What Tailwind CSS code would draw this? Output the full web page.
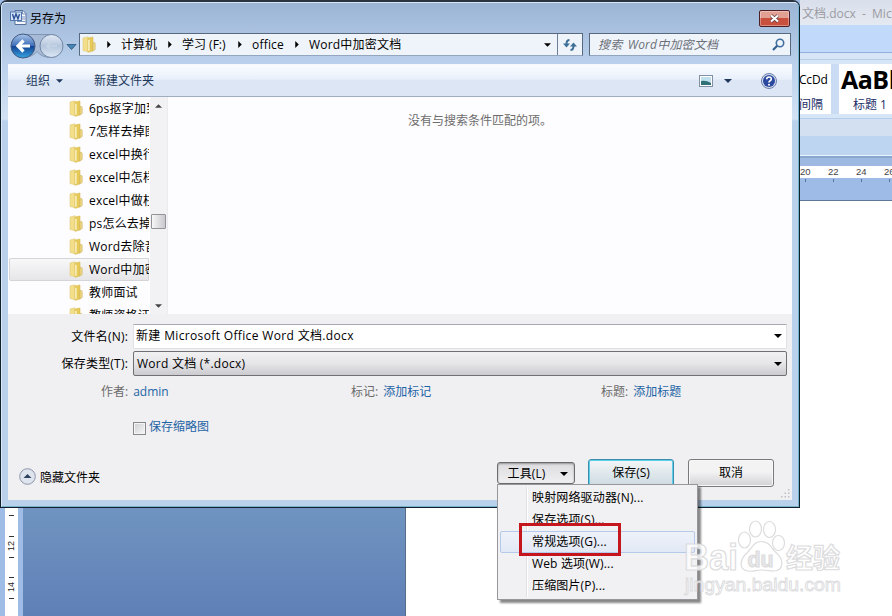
<!DOCTYPE html>
<html lang="zh-CN">

<head>
    <meta charset="UTF-8">
    <meta name="viewport" content="width=device-width, initial-scale=1.0">
    <title>另存为</title>
    <script src="https://cdn.jsdelivr.net/npm/@tailwindcss/browser@4"></script>
</head>

<body class="relative h-[616px] w-[892px] overflow-hidden bg-white font-['Open_Sans','Noto_Sans_CJK_SC',sans-serif] text-[12px] leading-[16px] text-black">

    <!-- Iconos compartidos -->
    <svg class="hidden">
        <symbol id="folder" viewBox="0 0 14 17">
            <path d="M1 2 6 .8v15L1 14.500z" fill="#f3df8a" stroke="#e0cb7c" stroke-width=".6" />
            <path d="M6 2 11 1v14l-5 1.300z" fill="#e6c957" stroke="#d9bd58" stroke-width=".6" />
            <path d="M6.300 4 7.500 3.500v11l-1.200.5z" fill="#fffbe0" />
            <path d="M11 6.500h1.200q1 0 1 1v6l-2.200 1.500z" fill="#efd980" stroke="#cdb468" stroke-width=".6" />
        </symbol>
        <symbol id="down" viewBox="0 0 8 4">
            <path d="M0 0h8L4 4z" fill="currentColor" />
        </symbol>
        <symbol id="right" viewBox="0 0 4 8">
            <path d="M0 0v8l4-4z" fill="currentColor" />
        </symbol>
    </svg>

    <!-- Ventana de Word -->
    <div class="flex h-full flex-col">
        <div class="flex h-[201px] shrink-0 justify-end bg-[#9dbbe6]">
            <div class="flex w-[92px] flex-col overflow-hidden whitespace-nowrap">
                <div class="h-[25px] shrink-0 bg-linear-to-b from-[#d9dfeb] to-[#e5e9f1] pt-[6px] pl-[2px] text-[12px] text-[#9b9ca3]">文档.docx&nbsp; - &nbsp;Micro</div>
                <div class="h-[28px] shrink-0 border-b border-[#8fb0df] bg-[#c1d9fb]"></div>
                <div class="h-[66px] shrink-0 border-b border-[#b4cdea] bg-[#d7e6f7]">
                    <div class="h-[7px] border-b border-[#b7cde8]"></div>
                    <div class="mt-[4px] flex h-[50px] gap-[8px] bg-[#c9dcf3]">
                        <div class="w-[31px] shrink-0 bg-white">
                            <p class="mt-[8px] -ml-[1px] font-['Open_Sans'] text-[12px] tracking-[-0.2px]">CcDd</p>
                            <p class="mt-[9px] -ml-[1px] text-[#1c2c66]">间隔</p>
                        </div>
                        <div class="w-[60px] shrink-0 bg-white">
                            <p class="pl-[2px] font-['Open_Sans'] text-[25px] leading-[31px] font-bold tracking-[-0.5px]">AaBb</p>
                            <p class="mt-[2px] pl-[14px] text-[#1c2c66]">标题 1</p>
                        </div>
                    </div>
                </div>
                <div class="h-[17px] shrink-0 bg-[#d2e0f2]"></div>
                <div class="h-[20px] shrink-0 border-b border-[#e5f6fb] bg-[#bdd5f1]"></div>
                <div class="h-[10px] shrink-0 border-t-2 border-[#8aa7cf] bg-[#9db9e2]"></div>
                <div class="grid h-[12px] shrink-0 grid-cols-[28px_28px_28px_28px] bg-white font-['Liberation_Sans'] text-[9.5px] leading-[12px] text-[#444]">
                    <span>20</span><span>22</span><span>24</span><span>26</span>
                </div>
                <div class="flex h-[22px] shrink-0 gap-[27px] bg-[#9dbbe6] pt-[1px] pl-[5px]">
                    <i class="h-[3px] w-px bg-[#55759f]"></i>
                    <i class="h-[3px] w-px bg-[#55759f]"></i>
                    <i class="h-[3px] w-px bg-[#55759f]"></i>
                    <i class="h-[3px] w-px bg-[#55759f]"></i>
                </div>
                <div class="h-px shrink-0 bg-[#5e7594]"></div>
            </div>
        </div>
        <div class="flex grow">
            <div class="w-[5px] bg-[#9fbce6]"></div>
            <div class="w-[13px] bg-white pt-[307px]">
                <svg class="h-[108px] w-[13px]" viewBox="0 0 13 108" fill="none" stroke="#333">
                    <path d="M4 7.500h5M4 28.500h5M4 49.500h5M4 69.500h5M4 90.500h5" />
                    <g fill="#222" stroke="none" font-family="Liberation Sans" font-size="9">
                        <text transform="translate(9 43) rotate(-90)">12</text>
                        <text transform="translate(9 84) rotate(-90)">14</text>
                    </g>
                </svg>
            </div>
            <div class="w-[5px] bg-[#9fbce6]"></div>
            <div class="w-[383px] border-r border-[#5a6d88] bg-linear-to-b from-[#6f93c0] from-75% to-[#5f80b7]"></div>
            <div class="grow bg-white"></div>
        </div>
    </div>

    <!-- Cuadro de diálogo "Guardar como" -->
    <div class="absolute top-0 left-0 flex h-[508px] w-[800px] flex-col rounded-t-[7px] border border-t-2 border-[#10202c] border-t-[#2b3440] bg-[#b9d1ec] whitespace-nowrap">
        <div class="flex min-h-0 grow flex-col rounded-t-[5px] border border-[#d9e7f6] border-r-[#73b5cf] border-b-[#79b3c9] bg-[linear-gradient(to_bottom,#9cb5d5_0,#bad0ec_60px,#d3e2f4_116px,#b9d1ea_118px,#b9d1ea_100%)] px-[6px] pb-[6px]">

            <!-- Barra de título -->
            <div class="flex h-[30px] shrink-0 items-start pt-[6px] pl-[2px]">
                <svg class="mt-[1px] h-[15px] w-[17px]" viewBox="0 0 17 15">
                    <path d="M5 .5h8l3 3v11H5z" fill="#f5f8fd" stroke="#56729c" />
                    <path d="M12.500 1v3H16M12 7h3M12 9h3M7 11.500h8" fill="none" stroke="#7895be" />
                    <rect x=".5" y="2" width="11" height="8.500" fill="#d7e4f7" stroke="#5277af" />
                    <path d="m2.500 4 1.500 5 2-5 2 5 1.500-5" fill="none" stroke="#2c5298" stroke-width="1.400" />
                </svg>
                <span class="mt-[2px] ml-[3px]">另存为</span>
                <button class="mt-[1px] mr-[2px] ml-auto flex h-[17px] w-[31px] items-center justify-center rounded-[2px] border border-[#4d2026] bg-linear-to-b from-[#e2a093] from-45% to-[#c9503c] to-50% shadow-[inset_0_0_0_1px_#ffffff55]">
                    <svg class="h-[9px] w-[11px]" viewBox="0 0 11 9">
                        <path d="m2 1.500 7 6m0-6-7 6" stroke="#5d3a42" stroke-width="3.600" />
                        <path d="m2 1.500 7 6m0-6-7 6" stroke="#fff" stroke-width="2.200" />
                    </svg>
                </button>
            </div>

            <!-- Navegación -->
            <div class="flex h-[31px] shrink-0 items-start">
                <svg class="-mt-px h-[28px] w-[70px] shrink-0" viewBox="8 32 70 28">
                    <defs>
                        <linearGradient id="back" x2="0" y2="1">
                            <stop offset="0" stop-color="#aac5ea" />
                            <stop offset=".48" stop-color="#3f6fb8" />
                            <stop offset=".5" stop-color="#123f91" />
                            <stop offset="1" stop-color="#38a5e2" />
                        </linearGradient>
                        <linearGradient id="fwd" x2="0" y2="1">
                            <stop offset="0" stop-color="#e2ebf6" />
                            <stop offset=".5" stop-color="#b5c6dc" />
                            <stop offset="1" stop-color="#dce8f5" />
                        </linearGradient>
                    </defs>
                    <path d="M23 34.500h28a11.500 11.500 0 0 1 0 23q-9 0-14-6-5 6-14 6" fill="#a7bbd6" stroke="#8195b3" />
                    <circle cx="23" cy="46" r="12" fill="url(#back)" stroke="#40587f" />
                    <circle cx="51.500" cy="46" r="11.500" fill="url(#fwd)" stroke="#7187a6" />
                    <path d="M30 46H18m5.500-5.500L18 46l5.500 5.500" fill="none" stroke="#fff" stroke-width="3.200" />
                    <path d="M57 46H47m4-4-4 4 4 4" fill="none" stroke="#c8d5e6" stroke-width="1.500" />
                    <path d="M67 44.500h9l-4.500 5z" fill="#4787b5" stroke="#28547e" stroke-width=".8" />
                </svg>
                <div class="ml-px flex h-[23px] w-[504px] items-center border border-[#57697f] border-b-[#93a6bf] bg-[#eff4fb]">
                    <svg class="ml-[2px] h-[17px] w-[14px]"><use href="#folder" /></svg>
                    <svg class="ml-[11px] h-[7px] w-[4px]"><use href="#right" /></svg>
                    <span class="ml-[10px] w-[36px]">计算机</span>
                    <svg class="ml-[11px] h-[7px] w-[4px]"><use href="#right" /></svg>
                    <span class="ml-[10px] w-[46px]">学习 (F:)</span>
                    <svg class="ml-[10px] h-[7px] w-[4px]"><use href="#right" /></svg>
                    <span class="ml-[10px] w-[32px] tracking-[0.2px]">office</span>
                    <svg class="ml-[11px] h-[7px] w-[4px]"><use href="#right" /></svg>
                    <span class="ml-[10px] tracking-[0.2px]">Word中加密文档</span>
                    <svg class="mr-[6px] ml-auto h-[4px] w-[7px]"><use href="#down" /></svg>
                    <div class="flex h-full w-[25px] items-center justify-center border-l border-[#6d7f96]">
                        <svg class="h-[12px] w-[14px]" viewBox="0 0 14 12" fill="none" stroke="#3d7097" stroke-width="2">
                            <path d="M6.500 1Q3.500 1 3.500 5" />
                            <path d="M7.500 11q3 0 3-4" />
                            <path d="M0 4.500h7L3.500 8.500zM7 7.500h7l-3.500-4z" fill="#3d7097" stroke="none" />
                        </svg>
                    </div>
                </div>
                <div class="ml-[6px] flex h-[23px] w-[202px] items-center border border-[#57697f] border-b-[#93a6bf] bg-[#eff4fb] pl-[8px] text-[#6b7078] italic">
                    <span class="pt-[1px] tracking-[0.2px] word-spacing">搜索&nbsp;<span class="ml-[2px]">Word中加密文档</span></span>
                    <svg class="mr-[5px] ml-auto h-[13px] w-[13px]" viewBox="0 0 13 13" fill="none">
                        <circle cx="8" cy="5" r="3.700" stroke="#3f6d9c" stroke-width="1.600" />
                        <path d="m5.200 7.800-4.200 4.200" stroke="#35608f" stroke-width="2.200" />
                    </svg>
                </div>
            </div>

            <!-- Barra de comandos -->
            <div class="flex h-[33px] shrink-0 items-center border-t border-b border-t-[#f4f8fc] border-b-[#a0adbf] bg-linear-to-b from-[#fafcff] from-0% via-[#e9f0fb] via-45% to-[#dce6f5] to-50% pl-[18px] text-[#1e395b]">
                <span>组织</span>
                <svg class="ml-[6px] h-[4px] w-[7px]"><use href="#down" /></svg>
                <span class="ml-[31px]">新建文件夹</span>
                <svg class="ml-auto h-[12px] w-[14px]" viewBox="0 0 14 12">
                    <rect x=".5" y=".5" width="13" height="11" fill="#fff" stroke="#8290a4" />
                    <path d="M2 2h10v8H2z" fill="#bfe0ec" />
                    <path d="M2 6q5-1 10 2v2H2z" fill="#2f7177" />
                </svg>
                <svg class="ml-[11px] h-[4px] w-[8px]"><use href="#down" /></svg>
                <svg class="mr-[15px] ml-[29px] h-[16px] w-[16px]" viewBox="0 0 16 16">
                    <circle cx="8" cy="8" r="7.500" fill="#d6dded" stroke="#6c7fae" />
                    <circle cx="8" cy="8" r="6" fill="#2b4a9f" />
                    <path d="M5.700 6.300q0-2.300 2.300-2.300t2.300 2q0 1.200-1.200 1.800Q8 8.300 8 9.600" fill="none" stroke="#fff" stroke-width="1.600" />
                    <circle cx="8" cy="11.800" r="1" fill="#fff" />
                </svg>
            </div>

            <!-- Árbol de carpetas y lista de archivos -->
            <div class="flex h-[217px] shrink-0 bg-[#fdfcfe]">
                <div class="w-[142px] pr-[1px]">
                    <div id="tree" class="h-full overflow-hidden"></div>
                </div>
                <div class="flex w-[18px] flex-col items-center border-r border-[#ecebf0] bg-[#f2f1f4] pr-[1px]">
                    <svg class="mt-[7px] h-[4px] w-[7px] rotate-180 text-[#444]"><use href="#down" /></svg>
                    <div class="mt-[106px] h-[15px] w-[15px] rounded-[1px] border border-[#93939a] bg-linear-to-r from-[#f7f7f8] to-[#c9c9ce]"></div>
                    <svg class="mt-auto mb-[6px] h-[4px] w-[7px] text-[#444]"><use href="#down" /></svg>
                </div>
                <div class="grow pt-[16px] text-center text-[#6d6d6d]">没有与搜索条件匹配的项。</div>
            </div>

            <!-- Formulario -->
            <div class="flex min-h-0 grow flex-col bg-[#f0eff1]">
                <div class="mt-[10px] flex h-[25px] shrink-0 items-center">
                    <label class="w-[120px] text-right tracking-[0.2px]">文件名(N):</label>
                    <div class="ml-[5px] flex h-[25px] w-[654px] items-center border border-[#e0e1e6] border-t-[#a6a8af] bg-white pb-[2px] pl-[2px]">
                        <span class="tracking-[0.35px]">新建 Microsoft Office Word 文档.docx</span>
                        <svg class="mr-[4px] ml-auto h-[4px] w-[8px]"><use href="#down" /></svg>
                    </div>
                </div>
                <div class="mt-[2px] flex h-[25px] shrink-0 items-center">
                    <label class="w-[120px] text-right tracking-[0.2px]">保存类型(T):</label>
                    <div class="ml-[5px] flex h-[25px] w-[654px] items-center rounded-[2px] border border-[#707074] bg-linear-to-b from-[#f1f1f2] from-0% via-[#e6e5e8] via-50% to-[#cbcace] pl-[3px]">
                        <span class="tracking-[0.25px]">Word 文档 (*.docx)</span>
                        <svg class="mr-[4px] ml-auto h-[4px] w-[8px]"><use href="#down" /></svg>
                    </div>
                </div>
                <div class="mt-[8px] flex h-[17px] shrink-0 text-[#1d64a6]">
                    <div class="flex w-[250px] gap-[5px] pl-[93px]"><span class="text-[#6b6b6b]">作者:</span>admin</div>
                    <div class="flex w-[250px] gap-[5px] pl-[93px]"><span class="text-[#6b6b6b]">标记:</span>添加标记</div>
                    <div class="flex gap-[5px] pl-[93px]"><span class="text-[#6b6b6b]">标题:</span>添加标题</div>
                </div>
                <div class="mt-[18px] flex h-[17px] shrink-0 pl-[125px] text-[#1d64a6]">
                    <div class="mt-[3px] h-[13px] w-[13px] border border-[#86888d] bg-linear-to-br from-[#cfd0d4] to-[#f6f6f7] shadow-[inset_0_0_0_1px_#f4f4f4]"></div>
                    <span class="ml-[3px]">保存缩略图</span>
                </div>
                <div class="mt-[23px] flex items-start">
                    <svg class="mt-[9px] ml-[11px] h-[17px] w-[17px]" viewBox="0 0 17 17">
                        <circle cx="8.500" cy="8.500" r="7.800" fill="#dfe5ee" stroke="#8c95a6" />
                        <path d="M4.500 10h8l-4-4z" fill="#2d4360" />
                    </svg>
                    <span class="mt-[11px] ml-[4px]">隐藏文件夹</span>
                    <button class="mt-[3px] ml-auto flex h-[22px] w-[78px] items-center justify-center gap-[15px] rounded-[3px] border border-[#6b6b70] bg-linear-to-b from-[#dddce0] to-[#efeef0] pt-[1px] pl-[4px] shadow-[inset_0_1px_2px_#0005]">
                        <span class="tracking-[0.1px]">工具(L)</span>
                        <svg class="h-[4px] w-[8px]"><use href="#down" /></svg>
                    </button>
                    <button class="ml-[13px] h-[29px] w-[86px] rounded-[3px] border border-[#3b8fab] bg-linear-to-b from-[#f3f6f8] to-[#cbd9e0] pb-[1px] shadow-[inset_0_0_0_1px_#5ccdea]">保存(S)</button>
                    <button class="mr-[18px] ml-[14px] h-[28px] w-[86px] rounded-[3px] border border-[#7a7a7e] bg-linear-to-b from-[#f3f3f4] from-45% to-[#d2d1d5] shadow-[inset_0_0_0_1px_#f8f8f8]">取消</button>
                </div>
                <svg class="mt-auto mr-[2px] mb-[2px] ml-auto h-[9px] w-[9px]" viewBox="0 0 9 9" fill="#c0c1c6">
                    <path d="M7 0h1.500v1.500H7zM7 3.500h1.500V5H7zM7 7h1.500v1.500H7zM3.500 3.500H5V5H3.500zM3.500 7H5v1.500H3.500zM0 7h1.500v1.500H0z" />
                </svg>
            </div>
        </div>
    </div>

    <!-- Menú de herramientas -->
    <div class="absolute top-[484px] left-[497px] h-[116px] w-[201px] border border-[#97979b] bg-[#f1f0f2] p-[2px] shadow-[3px_3px_2px_#0007]">
        <div class="h-full bg-[linear-gradient(to_right,transparent_26px,#e0e0e3_26px,#e0e0e3_27px,#fff_27px,#fff_28px,transparent_28px)] tracking-[0.15px] whitespace-nowrap">
            <div class="h-[22px] pt-[3px] pl-[32px]">映射网络驱动器(N)...</div>
            <div class="h-[22px] pt-[3px] pl-[32px]">保存选项(S)...</div>
            <div class="h-[22px] rounded-[2px] border border-[#b5cae9] bg-linear-to-b from-[#eef1f8] to-[#e2e9f6] pt-[2px] pl-[31px]">常规选项(G)...</div>
            <div class="h-[22px] pt-[3px] pl-[32px]">Web 选项(W)...</div>
            <div class="h-[22px] pt-[3px] pl-[32px]">压缩图片(P)...</div>
        </div>
    </div>
    <div class="absolute top-[523px] left-[519px] h-[33px] w-[102px] border-3 border-[#c5161d]"></div>

    <!-- Marca de agua -->
    <svg class="absolute top-[515px] left-[680px] h-[85px] w-[170px]" viewBox="680 515 170 85" fill="#fff" fill-opacity=".8" stroke="#dcdcde" stroke-width="1.200">
        <g font-family="Liberation Sans" font-weight="bold">
            <text x="684" y="570" font-size="36" textLength="54" lengthAdjust="spacingAndGlyphs">Bai</text>
            <ellipse cx="744.500" cy="540" rx="6" ry="8" />
            <ellipse cx="755.500" cy="529" rx="6" ry="8" />
            <ellipse cx="769.500" cy="529.500" rx="6" ry="8" />
            <ellipse cx="778.500" cy="543" rx="6" ry="7.500" />
            <path d="M761 541.500c8 0 10 6 15 11 9 8 7 18-2 18.500-5 0-8-1-13-1s-8 2-13 1c-9-1-9-11-1-18 5-5 7-11.500 14-11.500z" />
            <text x="747.500" y="567" font-size="22" textLength="26" lengthAdjust="spacingAndGlyphs" fill="#e3e3e5">du</text>
            <text x="786" y="568" font-size="27" font-family="Noto Sans CJK SC">经验</text>
            <text x="685" y="591" font-size="18" font-weight="normal" textLength="156" lengthAdjust="spacingAndGlyphs" stroke-width=".9">jingyan.baidu.com</text>
        </g>
    </svg>

    <script>
        const folders = [
            '6ps抠字加到',
            '7怎样去掉图',
            'excel中换行',
            'excel中怎样',
            'excel中做柱',
            'ps怎么去掉',
            'Word去除音',
            'Word中加密',
            '教师面试',
            '教师资格证'
        ];
        const selected = 7;

        // Cargar las carpetas del árbol
        document.getElementById('tree').innerHTML = folders.map((name, index) => `
            <div class="ml-[1px] flex h-[23px] items-center border pl-[59px] ${index === selected ? 'rounded-l-[2px] border-[#d5d5d9] bg-linear-to-b from-[#f8f8f9] to-[#e6e6e8]' : 'border-transparent'}">
                <svg class="h-[17px] w-[14px] shrink-0"><use href="#folder" /></svg>
                <span class="ml-[6px] tracking-[0.2px]">${name}</span>
            </div>
        `).join('');
    </script>

</body>

</html>
